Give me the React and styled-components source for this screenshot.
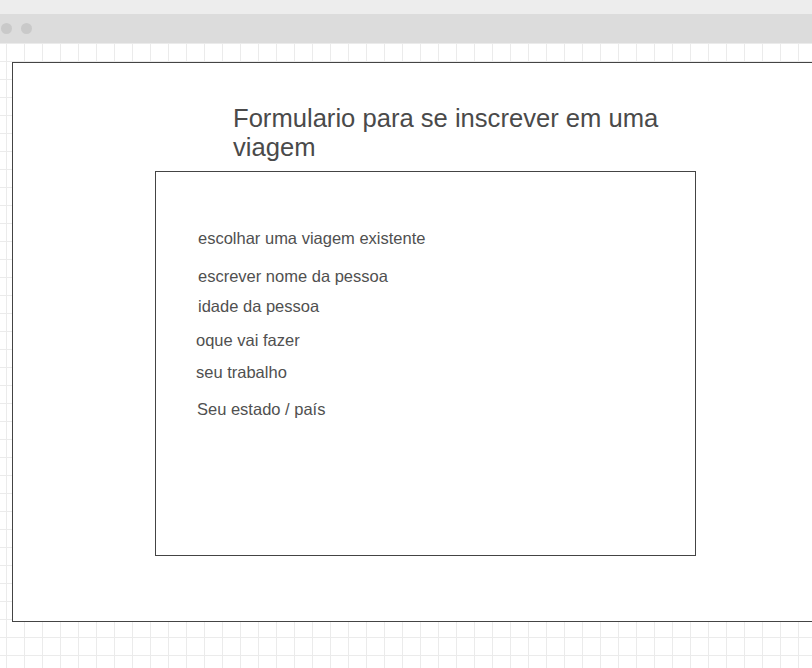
import React from "react";
import styled, { createGlobalStyle } from "styled-components";

const GlobalStyle = createGlobalStyle`
  html, body {
    margin: 0;
    padding: 0;
    background: #ffffff;
  }
  body {
    font-family: "Liberation Sans", Arial, sans-serif;
    overflow: hidden;
  }
`;

const Page = styled.div`
  width: 812px;
  height: 668px;
  display: flex;
  flex-direction: column;
  overflow: hidden;
`;

const TopStrip = styled.div`
  height: 14px;
  flex: none;
  background: #ededed;
`;

const TitleBar = styled.div`
  height: 29px;
  flex: none;
  background: #dcdcdc;
  display: flex;
  align-items: center;
  gap: 9px;
  padding-left: 1px;
`;

const Dot = styled.span`
  width: 11px;
  height: 11px;
  border-radius: 50%;
  background: #c9c9c9;
`;

const Canvas = styled.div`
  flex: 1;
  overflow: hidden;
  background-color: #ffffff;
  background-image:
    linear-gradient(to right, #ebebeb 1px, transparent 1px),
    linear-gradient(to bottom, #ebebeb 1px, transparent 1px);
  background-size: 18px 18px, 18px 18px;
  background-position: 6px 0, 0 0;
  padding-top: 19px;
  padding-left: 12px;
`;

const Frame = styled.div`
  box-sizing: border-box;
  width: 820px;
  height: 560px;
  background: #ffffff;
  border: 1px solid #444444;
  display: flex;
  flex-direction: column;
  align-items: flex-start;
`;

const Heading = styled.h1`
  margin: 41px 0 0 220px;
  max-width: 470px;
  font-size: 25.6px;
  line-height: 29px;
  font-weight: normal;
  color: #4a4a4a;
`;

const FormBox = styled.div`
  box-sizing: border-box;
  width: 541px;
  height: 385px;
  margin: 9px 0 0 142px;
  border: 1px solid #444444;
  padding: 57px 0 0 42px;
  display: flex;
  flex-direction: column;
  align-items: flex-start;
`;

const FieldLabel = styled.div`
  margin-top: ${(p) => p.$gap || 0}px;
  margin-left: ${(p) => p.$shift || 0}px;
  font-size: 16.5px;
  line-height: 18px;
  color: #505050;
  white-space: nowrap;
`;

const fields = [
  { text: "escolhar uma viagem existente", gap: 0, shift: 0 },
  { text: "escrever nome da pessoa", gap: 20, shift: 0 },
  { text: "idade da pessoa", gap: 12, shift: 0 },
  { text: "oque vai fazer", gap: 16, shift: -2 },
  { text: "seu trabalho", gap: 14, shift: -2 },
  { text: "Seu estado / país", gap: 19, shift: -1 },
];

export default function App() {
  return (
    <>
      <GlobalStyle />
      <Page>
        <TopStrip />
        <TitleBar>
          <Dot />
          <Dot />
        </TitleBar>
        <Canvas>
          <Frame>
            <Heading>Formulario para se inscrever em uma viagem</Heading>
            <FormBox>
              {fields.map((f) => (
                <FieldLabel key={f.text} $gap={f.gap} $shift={f.shift}>
                  {f.text}
                </FieldLabel>
              ))}
            </FormBox>
          </Frame>
        </Canvas>
      </Page>
    </>
  );
}
